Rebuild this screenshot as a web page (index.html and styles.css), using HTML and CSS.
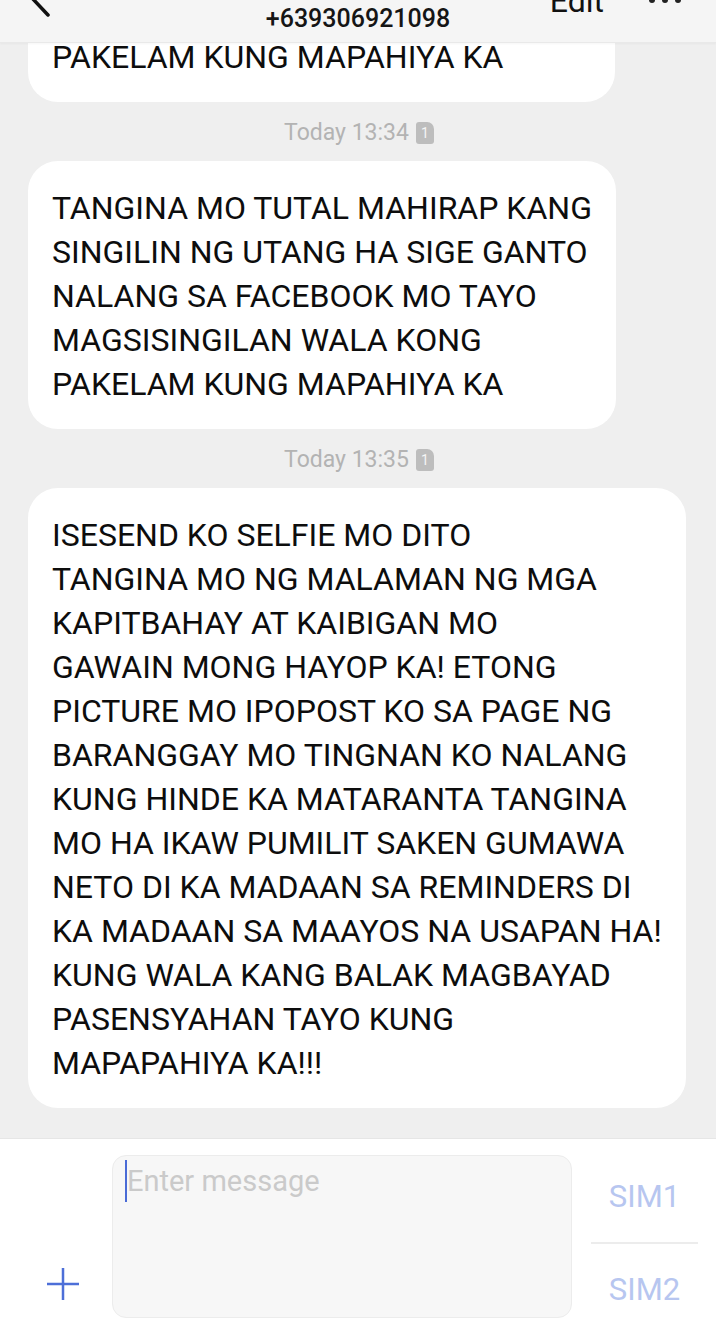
FILE: index.html
```html
<!DOCTYPE html>
<html lang="en">
<head>
  <meta charset="UTF-8">
  <meta name="viewport" content="width=device-width, initial-scale=1.0">
  <title>+639306921098</title>
  <link rel="stylesheet" href="styles.css">
</head>
<body>
  <div class="header">
    <svg class="back" width="80" height="30" viewBox="0 0 80 30">
      <path d="M67 -2 H32 M32 -2 L48 15" fill="none" stroke="#111" stroke-width="3.5" stroke-linecap="round"/>
    </svg>
    <div class="title">+639306921098</div>
    <div class="edit">Edit</div>
    <svg class="more" width="48" height="10" viewBox="0 0 48 10">
      <circle cx="6" cy="0" r="3" fill="#222"/>
      <circle cx="19" cy="0" r="3" fill="#222"/>
      <circle cx="32" cy="0" r="3" fill="#222"/>
    </svg>
  </div>

  <div class="chat">
    <div class="bubble first">PAKELAM KUNG MAPAHIYA KA</div>

    <div class="time">Today 13:34 <span class="sim">1</span></div>

    <div class="bubble">
      TANGINA MO TUTAL MAHIRAP KANG<br>
      SINGILIN NG UTANG HA SIGE GANTO<br>
      NALANG SA FACEBOOK MO TAYO<br>
      MAGSISINGILAN WALA KONG<br>
      PAKELAM KUNG MAPAHIYA KA
    </div>

    <div class="time">Today 13:35 <span class="sim">1</span></div>

    <div class="bubble">
      ISESEND KO SELFIE MO DITO<br>
      TANGINA MO NG MALAMAN NG MGA<br>
      KAPITBAHAY AT KAIBIGAN MO<br>
      GAWAIN MONG HAYOP KA! ETONG<br>
      PICTURE MO IPOPOST KO SA PAGE NG<br>
      BARANGGAY MO TINGNAN KO NALANG<br>
      KUNG HINDE KA MATARANTA TANGINA<br>
      MO HA IKAW PUMILIT SAKEN GUMAWA<br>
      NETO DI KA MADAAN SA REMINDERS DI<br>
      KA MADAAN SA MAAYOS NA USAPAN HA!<br>
      KUNG WALA KANG BALAK MAGBAYAD<br>
      PASENSYAHAN TAYO KUNG<br>
      MAPAPAHIYA KA!!!
    </div>
  </div>

  <div class="composer">
    <div class="plus">
      <svg width="34" height="34" viewBox="0 0 34 34">
        <path d="M17 1 V33 M1 17 H33" stroke="#4d6fd8" stroke-width="2.5"/>
      </svg>
    </div>
    <div class="input">
      <span class="cursor"></span><span class="placeholder">Enter message</span>
    </div>
    <div class="sims">
      <div class="sim-btn">SIM1</div>
      <div class="sim-line"></div>
      <div class="sim-btn second">SIM2</div>
    </div>
  </div>
</body>
</html>
```

FILE: styles.css
```css
html, body {
  margin: 0;
  height: 100%;
}
body {
  font-family: Roboto, "Noto Sans", sans-serif;
  background: #efefef;
  color: #111;
  display: flex;
  flex-direction: column;
  overflow: hidden;
  position: relative;
}
.header {
  position: absolute;
  top: 0;
  left: 0;
  right: 0;
  height: 42px;
  background: #f5f5f5;
  border-bottom: 1px solid #e9e9e9;
  box-shadow: 0 1px 2px rgba(0,0,0,0.04);
  display: flex;
  align-items: flex-start;
  z-index: 2;
}
.back {
  flex: none;
}
.title {
  position: absolute;
  left: 0;
  right: 0;
  top: 4px;
  text-align: center;
  font-size: 25px;
  font-weight: 500;
  line-height: 30px;
  color: #151515;
}
.edit {
  margin-left: auto;
  margin-top: -15px;
  font-size: 32px;
  line-height: 32px;
  color: #111;
}
.more {
  margin-left: 42px;
  margin-right: 22px;
}
.chat {
  flex: 1;
  padding: 10px 26px 0 28px;
  display: flex;
  flex-direction: column;
  align-items: flex-start;
  overflow: hidden;
}
.bubble {
  background: #fff;
  border-radius: 30px;
  padding: 25px 24px 23px;
  font-size: 32px;
  line-height: 44px;
  white-space: nowrap;
  color: #0d0d0d;
}
.bubble.first {
  box-sizing: border-box;
  width: 587px;
}
.time {
  align-self: center;
  margin: 18px 0 15px;
  font-size: 23px;
  line-height: 26px;
  color: #b3b3b3;
  display: flex;
  align-items: center;
  gap: 7px;
}
.sim {
  width: 18px;
  height: 22px;
  background: #bdbdbd;
  border-radius: 3px 7px 3px 3px;
  color: #f5f5f5;
  font-size: 14px;
  line-height: 22px;
  text-align: center;
}
.composer {
  flex: none;
  height: 206px;
  box-sizing: border-box;
  background: #fff;
  border-top: 1px solid #e6e6e6;
  padding: 16px 18px 26px 0;
  display: flex;
}
.plus {
  width: 98px;
  padding-left: 14px;
  display: flex;
  align-items: flex-end;
  justify-content: center;
  padding-bottom: 17px;
}
.input {
  width: 460px;
  box-sizing: border-box;
  background: #f7f7f7;
  border: 1px solid #ececec;
  border-radius: 14px;
  padding: 4px 12px;
  display: flex;
  align-items: flex-start;
}
.cursor {
  width: 2px;
  height: 42px;
  background: #4a6bd6;
}
.placeholder {
  font-size: 29px;
  line-height: 42px;
  color: #cacaca;
}
.sims {
  margin-left: 19px;
  width: 107px;
  display: flex;
  flex-direction: column;
}
.sims > div {
  flex-shrink: 0;
}
.sim-btn {
  height: 82px;
  display: flex;
  align-items: center;
  justify-content: center;
  font-size: 31px;
  color: #b7c6f0;
}
.sim-btn.second {
  height: 90px;
}
.sim-line {
  height: 2px;
  margin-top: 5px;
  background: #ececec;
}
```
